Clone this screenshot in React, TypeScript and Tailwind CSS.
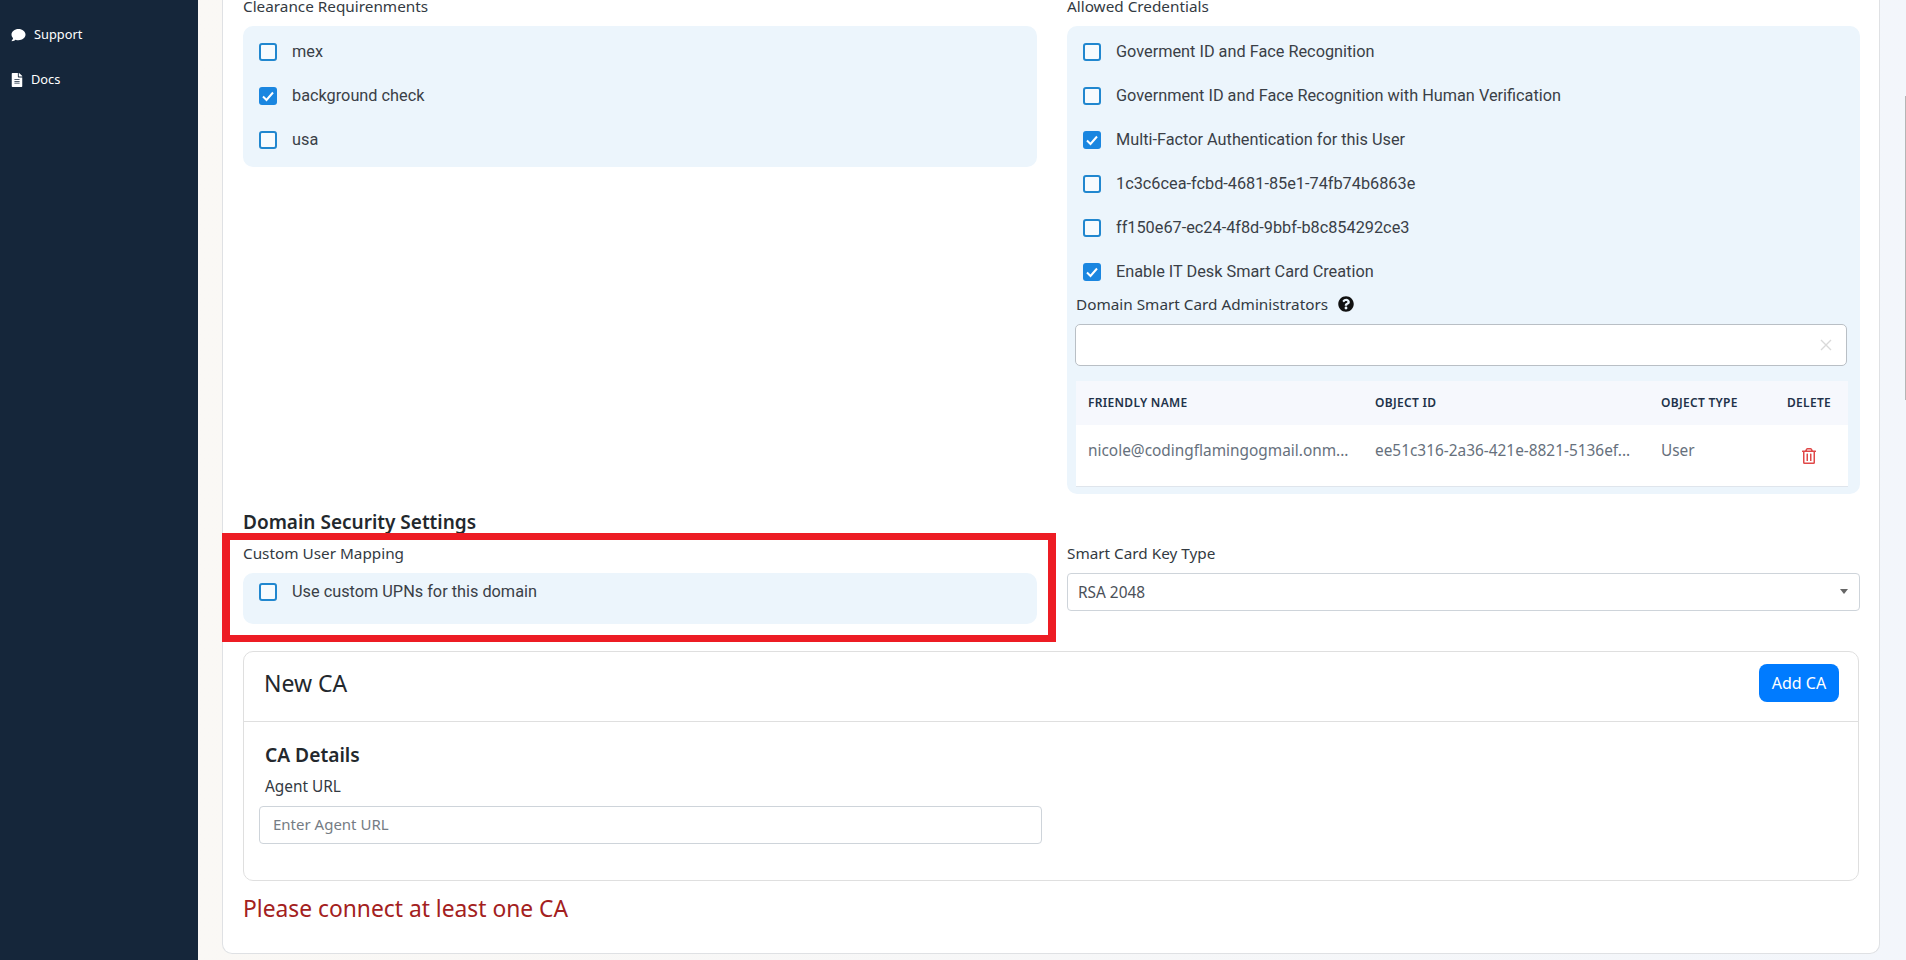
import { FaComment, FaFileAlt, FaQuestionCircle, FaRegTrashAlt } from 'react-icons/fa';

const clearances = [
  { label: 'mex', checked: false },
  { label: 'background check', checked: true },
  { label: 'usa', checked: false },
];

const credentials = [
  { label: 'Goverment ID and Face Recognition', checked: false },
  { label: 'Government ID and Face Recognition with Human Verification', checked: false },
  { label: 'Multi-Factor Authentication for this User', checked: true },
  { label: '1c3c6cea-fcbd-4681-85e1-74fb74b6863e', checked: false },
  { label: 'ff150e67-ec24-4f8d-9bbf-b8c854292ce3', checked: false },
  { label: 'Enable IT Desk Smart Card Creation', checked: true },
];

const CheckBox = ({ checked }: { checked: boolean }) => (
  <span
    className={
      checked
        ? 'flex h-[18px] w-[18px] shrink-0 items-center justify-center rounded-[3px] bg-[#1a86e0]'
        : 'h-[18px] w-[18px] shrink-0 rounded-[3px] border-2 border-[#2187cf] bg-[#f7fbfe]'
    }
  >
    {checked && (
      <svg viewBox="0 0 18 18" className="h-[18px] w-[18px]" fill="none" stroke="#fff" strokeWidth="2">
        <path d="M4 9.5l3.5 3.5L14 5.5" />
      </svg>
    )}
  </span>
);

const CheckRow = ({ label, checked }: { label: string; checked: boolean }) => (
  <label className="flex h-[44px] items-center gap-[15px] pl-4 font-['Roboto',sans-serif] text-[16.3px] text-[#3a3f47]">
    <CheckBox checked={checked} />
    <span>{label}</span>
  </label>
);

const FieldLabel = ({ text }: { text: string }) => (
  <div className="mb-[8px] h-[24px] text-[15.3px] leading-[24px] text-[#333a42]">{text}</div>
);

const Sidebar = () => (
  <aside className="flex h-full w-[198px] shrink-0 flex-col gap-[28px] bg-[#15263a] pl-[11px] pt-[26px] text-[12.8px] text-white">
    <div className="flex h-[17px] items-center gap-[8px]">
      <FaComment className="h-[14px] w-[15px]" />
      <span>Support</span>
    </div>
    <div className="flex h-[17px] items-center gap-[8px]">
      <FaFileAlt className="h-[14px] w-[12px]" />
      <span>Docs</span>
    </div>
  </aside>
);

const AdminTable = () => (
  <table className="w-[772px] table-fixed text-left">
    <thead className="bg-[#f6f8fd] text-[12px] uppercase tracking-[0.3px] text-[#22324a]">
      <tr className="h-[44px]">
        <th className="w-[287px] px-3 font-semibold">Friendly Name</th>
        <th className="w-[286px] px-3 font-semibold">Object ID</th>
        <th className="w-[126px] px-3 font-semibold">Object Type</th>
        <th className="px-3 font-semibold">Delete</th>
      </tr>
    </thead>
    <tbody className="bg-white text-[15.4px] text-[#66707c]">
      <tr className="h-[61px] border-b border-[#dfe5ec] align-top">
        <td className="whitespace-nowrap px-3 pt-[14px]">nicole@codingflamingogmail.onm...</td>
        <td className="whitespace-nowrap px-3 pt-[14px]">ee51c316-2a36-421e-8821-5136ef...</td>
        <td className="px-3 pt-[14px]">User</td>
        <td className="pl-[27px] pt-[23px]">
          <FaRegTrashAlt className="h-4 w-[14px] text-[#e04848]" />
        </td>
      </tr>
    </tbody>
  </table>
);

const NewCaCard = () => (
  <section className="mt-[27px] h-[230px] rounded-[10px] border border-[#dfdfdf] bg-white">
    <header className="flex h-[70px] items-center justify-between border-b border-[#dfdfdf] pl-[20px] pr-[19px]">
      <h2 className="mb-[5px] text-[23px] text-[#23282d]">New CA</h2>
      <button className="mb-[7px] h-[38px] w-[80px] rounded-[8px] bg-[#007bff] text-[16px] text-white">Add CA</button>
    </header>
    <div className="px-[15px] pt-[20px]">
      <h3 className="pl-[6px] text-[19.2px] font-semibold leading-[26px] text-[#23282d]">CA Details</h3>
      <div className="mt-[7px] pl-[6px] text-[15.4px] leading-[24px] text-[#333a42]">Agent URL</div>
      <div className="mt-[7px] flex h-[38px] w-[783px] items-center rounded-[4px] border border-[#ced4da] pl-[13px] text-[15px] text-[#757c84]">
        Enter Agent URL
      </div>
    </div>
  </section>
);

export default function App() {
  return (
    <div className="relative flex h-[960px] w-full overflow-hidden font-['Noto_Sans',sans-serif]">
      <Sidebar />
      <main className="min-w-0 flex-1 bg-gradient-to-r from-[#faf8f5] to-[#f3f6fb] pl-[24px] pr-[26px]">
        <div className="h-[954px] overflow-hidden rounded-b-[10px] border-x border-b border-[#dfe1e4] bg-white px-[20px]">
          {/* page is scrolled a little, top label gets cut by the viewport */}
          <div className="-mt-[6px] grid grid-cols-[794px_793px] gap-x-[30px]">
            <div>
              <FieldLabel text="Clearance Requirenments" />
              <div className="rounded-[10px] bg-[#ecf5fc] pb-[5px] pt-[4px]">
                {clearances.map((c) => (
                  <CheckRow key={c.label} label={c.label} checked={c.checked} />
                ))}
              </div>
            </div>
            <div>
              <FieldLabel text="Allowed Credentials" />
              <div className="rounded-[10px] bg-[#ecf5fc] pb-[7px] pt-[4px]">
                {credentials.map((c) => (
                  <CheckRow key={c.label} label={c.label} checked={c.checked} />
                ))}
                <div className="-mt-[2px] flex h-[24px] items-center gap-[10px] pl-[9px] text-[15.3px] text-[#333a42]">
                  <span>Domain Smart Card Administrators</span>
                  <FaQuestionCircle className="h-4 w-4 text-[#111]" />
                </div>
                <div className="ml-[8px] mt-[8px] flex h-[42px] w-[772px] items-center justify-end rounded-[5px] border border-[#b9bfc5] bg-white pr-[13px] text-[#d9d9d9]">
                  <svg viewBox="0 0 14 14" className="h-[14px] w-[14px]" fill="none" stroke="currentColor" strokeWidth="1.4">
                    <path d="M2 2l10 10M12 2L2 12" />
                  </svg>
                </div>
                <div className="ml-[9px] mt-[15px]">
                  <AdminTable />
                </div>
              </div>
            </div>
          </div>

          <h2 className="mt-[14px] h-[28px] text-[19px] font-semibold leading-[28px] text-[#23282d]">
            Domain Security Settings
          </h2>
          <div className="mt-[5px] grid grid-cols-[794px_793px] gap-x-[30px]">
            <div>
              <FieldLabel text="Custom User Mapping" />
              <div className="flex items-start gap-[15px] rounded-[10px] bg-[#ecf5fc] pb-[23px] pl-4 pt-[10px] font-['Roboto',sans-serif] text-[16.3px] text-[#3a3f47]">
                <CheckBox checked={false} />
                <span className="leading-[18px]">Use custom UPNs for this domain</span>
              </div>
            </div>
            <div>
              <FieldLabel text="Smart Card Key Type" />
              <div className="flex h-[38px] items-center justify-between rounded-[4px] border border-[#ced4da] bg-white pl-[10px] pr-[11px] text-[15.4px] text-[#4a5058]">
                <span className="pt-[2px]">RSA 2048</span>
                <span className="h-0 w-0 border-x-[4px] border-t-[5px] border-x-transparent border-t-[#666]" />
              </div>
            </div>
          </div>

          <NewCaCard />

          <p className="mt-[14px] h-[28px] text-[22.8px] leading-[28px] text-[#a32020]">Please connect at least one CA</p>
        </div>
      </main>

      {/* annotation box + page scrollbar sit on top of the page */}
      <div className="absolute left-[222px] top-[533px] h-[109px] w-[834px] border-x-[8px] border-y-[7px] border-[#ed1c24]" />
      <div className="absolute right-0 top-[96px] h-[304px] w-[1px] bg-[#b5b5b5]" />
    </div>
  );
}
